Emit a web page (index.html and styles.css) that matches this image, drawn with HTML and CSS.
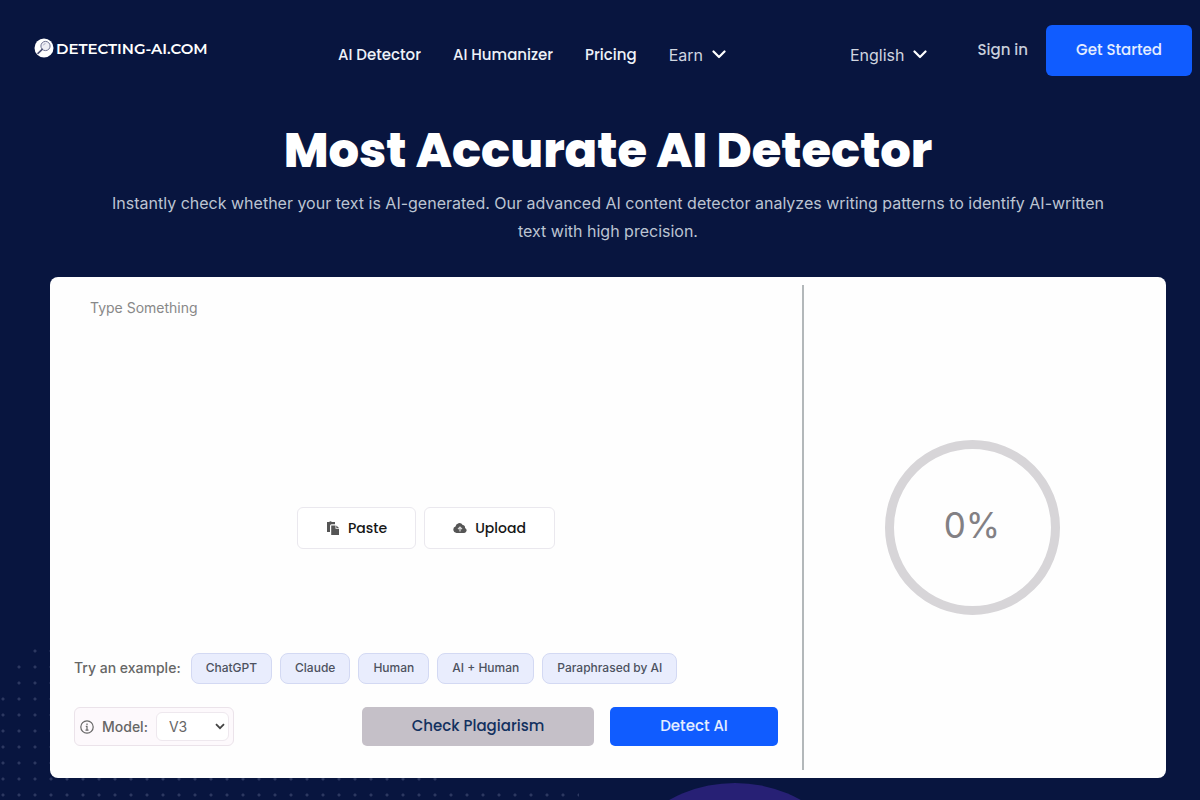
FILE: index.html
```html
<!DOCTYPE html>
<html lang="en">
<head>
    <meta charset="utf-8">
    <meta name="viewport" content="width=device-width, initial-scale=1">
    <title>Detecting-AI.com</title>
    <link rel="stylesheet" href="styles.css">
</head>
<body>
    <div class="page">
        <div class="dots"></div>
        <div class="blob"></div>

        <header class="header">
            <a href="#" class="logo">
                <svg width="20" height="20" viewBox="0 0 20 20">
                    <circle cx="10" cy="10" r="9.5" fill="#fff"/>
                    <circle cx="11.5" cy="8" r="4.6" fill="#eeeef5" stroke="#6d7091" stroke-width="1"/>
                    <path d="M8.2 11.4 4 15.4" stroke="#4a4e72" stroke-width="1.6" stroke-linecap="round"/>
                    <path d="M9.3 7.4a2.4 2.4 0 0 1 2.2-1.8" fill="none" stroke="#9a9db8" stroke-width=".8"/>
                </svg>
                <span>DETECTING-AI.COM</span>
            </a>
            <nav class="nav">
                <a href="#" class="nav-link">AI Detector</a>
                <a href="#" class="nav-link">AI Humanizer</a>
                <a href="#" class="nav-link">Pricing</a>
                <button type="button" class="dropdown">
                    Earn
                    <svg width="14" height="9" viewBox="0 0 14 9"><path d="m1.5 1.5 5.5 5.5 5.5-5.5" fill="none" stroke="#fff" stroke-width="2.2" stroke-linecap="round" stroke-linejoin="round"/></svg>
                </button>
            </nav>
            <div class="account">
                <button type="button" class="dropdown language">
                    English
                    <svg width="14" height="9" viewBox="0 0 14 9"><path d="m1.5 1.5 5.5 5.5 5.5-5.5" fill="none" stroke="#fff" stroke-width="2.2" stroke-linecap="round" stroke-linejoin="round"/></svg>
                </button>
                <a href="#" class="sign-in">Sign in</a>
                <button type="button" class="get-started">Get Started</button>
            </div>
        </header>

        <main class="main">
            <h1>Most Accurate AI Detector</h1>
            <p class="subtitle">Instantly check whether your text is AI-generated. Our advanced AI content detector analyzes writing patterns to identify AI-written text with high precision.</p>

            <div class="card">
                <section class="editor">
                    <textarea class="text-input" placeholder="Type Something" aria-label="Text to check"></textarea>
                    <div class="quick-actions">
                        <button type="button" class="quick-btn">
                            <svg width="14" height="14" viewBox="0 0 14 14" fill="#555"><path d="M1 1h2.2a1.5 1.5 0 0 1 2.6 0H9v2.2H5.5A1.5 1.5 0 0 0 4 4.7V11H1z"/><path d="M5.2 4.5h4.3v3.3H13V14H5.2z"/><path d="M10.3 4.5 13 7h-2.7z"/></svg>
                            Paste
                        </button>
                        <button type="button" class="quick-btn">
                            <svg width="14" height="14" viewBox="0 0 14 14"><path d="M3.5 12a3.3 3.3 0 0 1-1-6.4 3.9 3.9 0 0 1 7.2-1.7A2.5 2.5 0 0 1 12 7a2.6 2.6 0 0 1-.8 5z" fill="#555"/><path d="M7 10.5V6.3M5 8.1l2-2 2 2" fill="none" stroke="#ddd" stroke-width="1.2"/></svg>
                            Upload
                        </button>
                    </div>
                    <div class="examples">
                        <span class="examples-label">Try an example:</span>
                        <button type="button" class="chip">ChatGPT</button>
                        <button type="button" class="chip">Claude</button>
                        <button type="button" class="chip">Human</button>
                        <button type="button" class="chip">AI + Human</button>
                        <button type="button" class="chip">Paraphrased by AI</button>
                    </div>
                    <div class="footer-row">
                        <div class="model">
                            <svg width="14" height="14" viewBox="0 0 14 14" fill="none" stroke="#666" stroke-width="1.2"><circle cx="7" cy="7" r="6.2"/><path d="M5.8 6.4H7v3.7M5.5 10.1h3"/><path d="M7 3.5v1.4"/></svg>
                            <label for="model">Model:</label>
                            <span class="select-wrap">
                                <select id="model">
                                    <option>V3</option>
                                    <option>V2</option>
                                </select>
                                <svg class="select-arrow" width="10" height="7" viewBox="0 0 10 7"><path d="m1 1.2 4 4 4-4" fill="none" stroke="#444" stroke-width="1.8"/></svg>
                            </span>
                        </div>
                        <button type="button" class="btn plagiarism">Check Plagiarism</button>
                        <button type="button" class="btn detect">Detect AI</button>
                    </div>
                </section>
                <div class="divider"></div>
                <section class="result">
                    <div class="score">0%</div>
                </section>
            </div>
        </main>
    </div>
</body>
</html>
```
FILE: styles.css
```css
* {
    box-sizing: border-box;
}

body {
    margin: 0;
    background: #08153f;
    font-family: Inter, "Liberation Sans", sans-serif;
    color: #fff;
}

a {
    color: inherit;
    text-decoration: none;
}

button {
    font-family: inherit;
    cursor: pointer;
}

.page {
    position: relative;
    min-height: 100vh;
    overflow: hidden;
}

/* background decoration */
.dots {
    position: absolute;
    left: -5px;
    bottom: -3px;
    width: 584px;
    height: 160px;
    background: radial-gradient(circle, #2c3860 1px, transparent 2px) 0 0 / 16px 16px;
    clip-path: polygon(32px 0, 64px 0, 450px 128px, 450px 144px, 584px 144px, 584px 160px, 0 160px, 0 64px);
}

.blob {
    position: absolute;
    left: 599px;
    bottom: -255px;
    width: 272px;
    height: 272px;
    border-radius: 50%;
    background: #272075;
}

.header {
    display: flex;
    align-items: center;
    padding: 25px 8px 0 34px;
}

.logo {
    display: flex;
    align-items: center;
    gap: 2px;
    flex: 0 0 304px;
    padding-bottom: 5px;
    font-family: Montserrat, Poppins, Inter, sans-serif;
    font-size: 15px;
    font-weight: 600;
}

.nav {
    display: flex;
    align-items: center;
    gap: 32px;
    padding-top: 8px;
    color: #eef2f8;
    font-family: Poppins, Inter, sans-serif;
    font-size: 15px;
    font-weight: 500;
    white-space: nowrap;
}

.dropdown {
    display: flex;
    align-items: center;
    gap: 9px;
    padding: 0;
    border: none;
    background: none;
    color: #d0d6e0;
    font-family: Inter, sans-serif;
    font-size: 16px;
}

.account {
    display: flex;
    align-items: center;
    margin-left: auto;
    white-space: nowrap;
}

.language {
    margin-right: 50px;
    padding-top: 8px;
}

.sign-in {
    margin-right: 18px;
    padding-bottom: 2px;
    color: #c8cfdb;
    font-family: Poppins, Inter, sans-serif;
    font-size: 15px;
    font-weight: 500;
}

.get-started {
    width: 146px;
    height: 51px;
    padding-bottom: 3px;
    border: none;
    border-radius: 6px;
    background: #105cff;
    color: #e4edff;
    font-family: Poppins, Inter, sans-serif;
    font-size: 15px;
    font-weight: 500;
}

.main {
    position: relative;
    padding: 45px 34px 22px 50px;
}

h1 {
    margin: 0;
    font-family: Poppins, Inter, sans-serif;
    font-size: 48px;
    font-weight: 800;
    line-height: 60px;
    text-align: center;
}

.subtitle {
    max-width: 1016px;
    margin: 8px auto 32px;
    color: #bcc4d2;
    font-size: 16px;
    line-height: 28px;
    text-align: center;
}

.card {
    display: flex;
    min-height: 501px;
    border-radius: 8px;
    background: #fefefe;
    color: #666;
}

.editor {
    display: flex;
    flex: 1;
    flex-direction: column;
    padding: 0 24px 32px;
}

.text-input {
    flex: 1;
    width: 100%;
    padding: 20px 16px;
    border: none;
    outline: none;
    resize: none;
    background: transparent;
    color: #333;
    font-family: inherit;
    font-size: 14px;
    line-height: 22px;
}

.text-input::placeholder {
    color: #888;
}

.quick-actions {
    display: flex;
    justify-content: center;
    gap: 8px;
    margin-bottom: 104px;
}

.quick-btn {
    display: flex;
    align-items: center;
    gap: 8px;
    height: 42px;
    padding: 0 28px;
    border: 1px solid #eae8ee;
    border-radius: 6px;
    background: #fff;
    color: #161616;
    font-family: Poppins, Inter, sans-serif;
    font-size: 14px;
    font-weight: 500;
}

.examples {
    display: flex;
    align-items: center;
    flex-wrap: wrap;
    gap: 8px;
    margin-bottom: 23px;
}

.examples-label {
    margin-right: 2px;
    padding-bottom: 2px;
    font-size: 14px;
    font-weight: 500;
}

.chip {
    height: 31px;
    padding: 0 14px 2px;
    border: 1px solid #d3d9f3;
    border-radius: 8px;
    background: #e9edfd;
    color: #4d5260;
    font-size: 12px;
    font-weight: 500;
}

.footer-row {
    display: flex;
    align-items: center;
    gap: 16px;
}

.model {
    display: flex;
    align-items: center;
    gap: 8px;
    height: 39px;
    margin-right: auto;
    padding: 0 4px 0 5px;
    border: 1px solid #ebe3ea;
    border-radius: 6px;
    background: #fdf9fc;
    font-size: 14px;
    font-weight: 500;
}

.select-wrap {
    position: relative;
}

.model select {
    width: 73px;
    height: 29px;
    padding: 0 12px;
    border: 1px solid #eee8ee;
    border-radius: 6px;
    appearance: none;
    background: #fff;
    color: #666;
    font-family: inherit;
    font-size: 14px;
}

.select-arrow {
    position: absolute;
    top: 11px;
    right: 4px;
    pointer-events: none;
}

.btn {
    height: 39px;
    padding-bottom: 3px;
    border: none;
    border-radius: 5px;
    font-family: Poppins, Inter, sans-serif;
    font-size: 15px;
    font-weight: 500;
}

.plagiarism {
    width: 232px;
    background: #c5c0c8;
    color: #12305f;
}

.detect {
    width: 168px;
    background: #105cff;
    color: #e4edff;
}

.divider {
    width: 2px;
    margin: 8px 0;
    background: #b3b8ba;
}

.result {
    display: flex;
    align-items: center;
    justify-content: center;
    width: 362px;
    padding-right: 26px;
}

.score {
    display: flex;
    align-items: center;
    justify-content: center;
    width: 175px;
    height: 175px;
    padding-bottom: 6px;
    border: 9px solid #d7d5d8;
    border-radius: 50%;
    color: #828084;
    font-size: 35px;
}
```
